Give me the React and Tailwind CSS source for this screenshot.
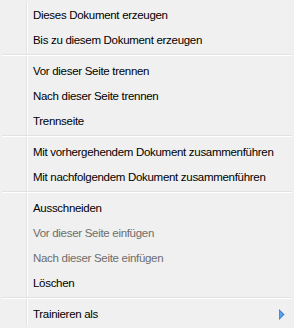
import React from 'react';

const GROUPS = [
  [{ label: 'Dieses Dokument erzeugen' }, { label: 'Bis zu diesem Dokument erzeugen' }],
  [{ label: 'Vor dieser Seite trennen' }, { label: 'Nach dieser Seite trennen' }, { label: 'Trennseite' }],
  [{ label: 'Mit vorhergehendem Dokument zusammenführen' }, { label: 'Mit nachfolgendem Dokument zusammenführen' }],
  [
    { label: 'Ausschneiden' },
    { label: 'Vor dieser Seite einfügen', disabled: true },
    { label: 'Nach dieser Seite einfügen', disabled: true },
    { label: 'Löschen' },
  ],
  [{ label: 'Trainieren als', submenu: true }],
];

function Item({ label, disabled, submenu }) {
  return (
    <div className="relative flex items-center h-[25px] pl-[33px] pr-2 whitespace-nowrap">
      <span className={disabled ? 'text-[#6d6d6d]' : 'text-black'}>{label}</span>
      {submenu && (
        <svg className="absolute right-[9px] top-[7px]" width="6" height="11" viewBox="0 0 6 11">
          <path d="M0 0 L5.5 5.5 L0 11 Z" fill="#2f7ad8" />
          <path d="M0.5 1.5 L4 5.5 L0.5 9.5 Z" fill="#5ba2ee" />
        </svg>
      )}
    </div>
  );
}

export default function App() {
  return (
    <div
      className="relative w-[294px] h-[328px] bg-[#f0f0f0] pt-[3px] text-[11.5px] tracking-[-0.3px] overflow-hidden"
      style={{ fontFamily: "'Liberation Sans', Arial, sans-serif" }}
    >
      {/* gutter line */}
      <div className="absolute left-[26px] top-[2px] bottom-[2px] w-[2px] border-l border-[#e2e3e3] bg-white" />
      {GROUPS.map((group, gi) => (
        <div key={gi}>
          {gi > 0 && (
            <div className="h-[6px] pt-[1px] pl-[2px] pr-[2px]">
              <div className="relative h-[2px] border-t border-[#e2e3e3] bg-white" />
            </div>
          )}
          {group.map((it) => (
            <Item key={it.label} {...it} />
          ))}
        </div>
      ))}
    </div>
  );
}
